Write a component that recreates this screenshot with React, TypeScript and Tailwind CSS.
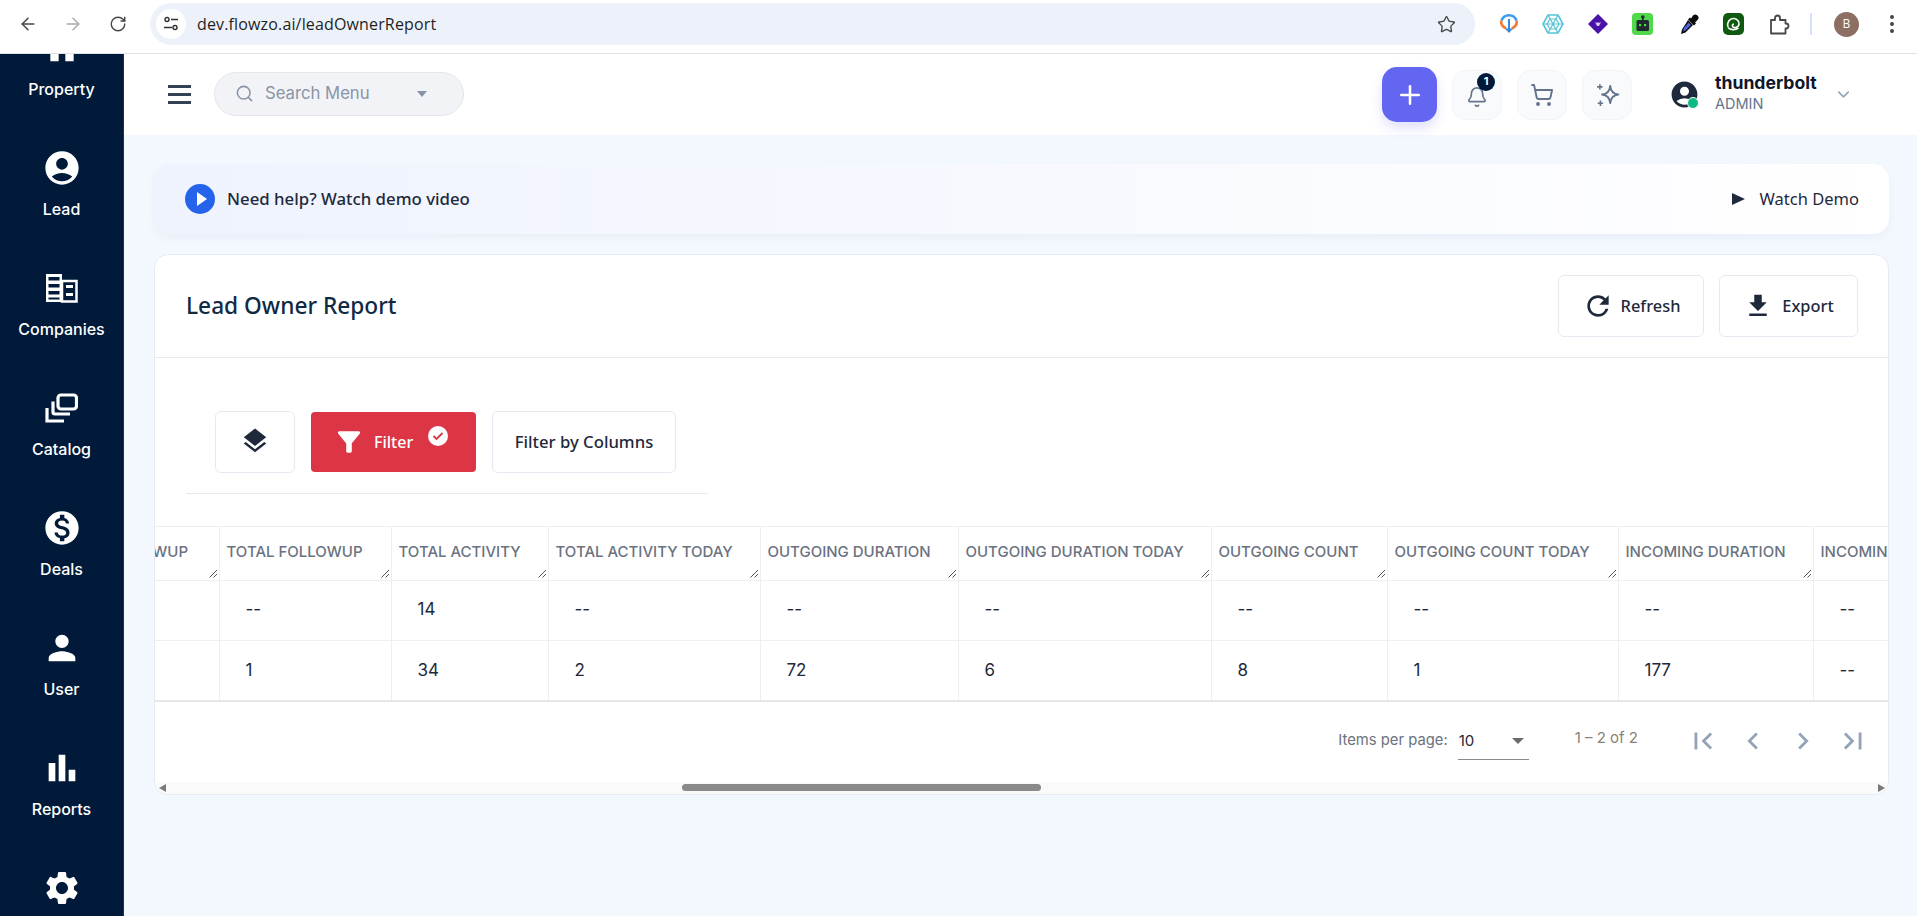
import React from "react";
import { ArrowLeft, ArrowRight, RotateCw, Star, Search, Bell, ShoppingCart, ChevronDown, Plus } from "lucide-react";
import { MdHome, MdAccountCircle, MdMonetizationOn, MdPerson, MdBarChart, MdSettings, MdFirstPage, MdLastPage, MdChevronLeft, MdChevronRight, MdRefresh, MdFileDownload, MdLayers, MdFilterAlt } from "react-icons/md";

const Companies = () => (
  <svg width="33" height="30" viewBox="0 0 33 30" className="mt-[5px] mb-[5px]" fill="none">
    <rect x="1" y="1" width="16" height="28" fill="#fff" />
    <rect x="3.5" y="4" width="11" height="3.5" fill="#011a3a" />
    <rect x="3.5" y="11" width="11" height="3.5" fill="#011a3a" />
    <rect x="3.5" y="18" width="11" height="3.5" fill="#011a3a" />
    <rect x="3.5" y="24.5" width="11" height="2" fill="#011a3a" />
    <rect x="17" y="8" width="14.5" height="20.5" fill="#011a3a" stroke="#fff" strokeWidth="2.5" />
    <rect x="21" y="12" width="7" height="3" fill="#fff" />
    <rect x="21" y="20" width="7" height="3" fill="#fff" />
  </svg>
);

const Catalog = () => (
  <svg width="33" height="30" viewBox="0 0 33 30" className="mt-[5px] mb-[5px]" fill="none" stroke="#fff" strokeWidth="3.2">
    <rect x="13" y="2" width="18.5" height="14" rx="3" />
    <path d="M8 8.5V19a2 2 0 0 0 2 2h15" />
    <path d="M2 15v13h17" />
  </svg>
);

const navIcon = "shrink-0 text-white";

const navItems: { label: string; icon: React.ReactNode }[] = [
  { label: "Property", icon: <MdHome size={40} className={navIcon} /> },
  { label: "Lead", icon: <MdAccountCircle size={40} className={navIcon} /> },
  { label: "Companies", icon: <Companies /> },
  { label: "Catalog", icon: <Catalog /> },
  { label: "Deals", icon: <MdMonetizationOn size={40} className={navIcon} /> },
  { label: "User", icon: <MdPerson size={40} className={navIcon} /> },
  { label: "Reports", icon: <MdBarChart size={40} className={navIcon} /> },
  { label: "", icon: <MdSettings size={40} className={navIcon} /> },
];

const Ext1 = () => (
  <svg width="20" height="22" viewBox="0 0 20 22" fill="none">
    <path d="M2.5 7.5A8 8 0 0 1 17.5 7.5" stroke="#3b9bf0" strokeWidth="2.6" />
    <path d="M2.2 7.5a8 8 0 0 0 5 8M17.8 7.5a8 8 0 0 1-5 8" stroke="#f27c38" strokeWidth="2.6" />
    <path d="M10 6v12" stroke="#2f8be6" strokeWidth="2" />
    <path d="M6 15.5h8L10 20z" fill="#2f8be6" />
  </svg>
);
const Ext2 = () => (
  <svg width="22" height="22" viewBox="0 0 22 22" fill="none" stroke="#55c3d6" strokeWidth="1.2">
    <path d="M6 2h10l5 9-5 9H6l-5-9z" strokeWidth="1.6" />
    <path d="M8 6h6l3 5-3 5H8l-3-5z" />
    <path d="M6 2l10 18M16 2L6 20M1 11h20" />
  </svg>
);
const Ext3 = () => (
  <svg width="22" height="22" viewBox="0 0 22 22">
    <path d="M11 1l10 10-10 10L1 11z" fill="#4a12a8" />
    <path d="M8 9l2 1 1-1 1 1 2-1-2 4h-2z" fill="#d8c8f5" />
  </svg>
);
const Ext4 = () => (
  <svg width="22" height="22" viewBox="0 0 22 22">
    <rect width="21" height="22" rx="4" fill="#4fd84a" />
    <rect x="10" y="3" width="1.6" height="4" fill="#1e2a2e" />
    <circle cx="10.8" cy="4" r="1.8" fill="#1e2a2e" />
    <rect x="4.5" y="7" width="12.5" height="11" rx="1.5" fill="#1e2a2e" />
    <rect x="7" y="11" width="2.2" height="2.2" fill="#4fd84a" />
    <rect x="12" y="11" width="2.2" height="2.2" fill="#4fd84a" />
  </svg>
);
const Ext5 = () => (
  <svg width="22" height="22" viewBox="0 0 22 22">
    <path d="M14 2.5a3 3 0 0 1 4.5 4.5L16 9.5l1 1-2 2-6 -6 2-2 1 1z" fill="#0b0b0b" />
    <path d="M9 7l5 5-7.5 7.5L2 21l1-4.5z" fill="#0b0b0b" />
    <path d="M9.5 9.5l2.5 2.5-5.5 5.5L4 18.5l.8-3.6z" fill="#4a63d8" />
  </svg>
);
const Ext6 = () => (
  <svg width="21" height="22" viewBox="0 0 21 22" fill="none">
    <rect width="21" height="22" rx="5" fill="#0f5a10" />
    <path d="M5 14c-1.5-4 1.5-9 6-8.5 3.5.4 5.5 3.5 5 6-.5 2.5-4 4-6 2.5-1.2-1-.8-2.8 1-3" stroke="#fff" strokeWidth="1.6" />
    <path d="M5 14.5c2 2.5 7 3 10.5.5" stroke="#fff" strokeWidth="1.6" />
  </svg>
);
const ChromePuzzle = () => (
  <svg width="21" height="21" viewBox="0 0 21 21" fill="none" stroke="#474747" strokeWidth="1.8" strokeLinejoin="round" className="ml-[25px]">
    <path d="M2 6h4V4a2.5 2.5 0 0 1 5 0v2h5.5v3.5h.5a2.5 2.5 0 0 1 0 5h-.5V19.5H2z" />
  </svg>
);
const SparkleIcon = () => (
  <svg width="25" height="25" viewBox="0 0 23 23" fill="none" stroke="#64748b" strokeWidth="1.7" strokeLinejoin="round">
    <path d="M14 3.5c.5 5 2.5 7.500 7.500 8-5 .5-7 3-7.500 8-.5-5-2.500-7.500-7.500-8 5-.5 7-3 7.500-8z" />
    <path d="M4.500 2v5M2 4.500h5M5 17v5M2.500 19.500h5" strokeWidth="1.5" />
  </svg>
);

const Chrome = () => (
  <header className="h-[54px] shrink-0 bg-white border-b border-[#e0e2e6] flex items-center pb-[5px] font-['Open_Sans',sans-serif]">
    <ArrowLeft size={20} strokeWidth={1.8} className="ml-[18px] text-[#474747] shrink-0" />
    <ArrowRight size={20} strokeWidth={1.8} className="ml-[25px] text-[#ababab] shrink-0" />
    <RotateCw size={18} strokeWidth={1.9} className="ml-[26px] text-[#474747] shrink-0" />
    <div className="ml-[23px] w-[1325px] h-[42px] rounded-full bg-[#edf2fa] flex items-center pl-[6px] pr-[19px] shrink-0">
      <div className="w-[30px] h-[30px] rounded-full bg-white flex items-center justify-center shrink-0">
        <svg width="16" height="16" viewBox="0 0 16 16" fill="none" stroke="#303030" strokeWidth="1.4">
          <circle cx="4" cy="3.5" r="2" />
          <path d="M8 3.5h7M1 11.5h8" />
          <circle cx="12" cy="11.5" r="2" />
        </svg>
      </div>
      <span className="ml-[11px] text-[16px] tracking-[0.15px] text-[#1f1f1f]">dev.flowzo.ai/leadOwnerReport</span>
      <Star size={19} strokeWidth={1.7} className="ml-auto text-[#474747]" />
    </div>
    <div className="ml-[23px] flex items-center shrink-0">
      <div className="w-[22px] flex justify-center"><Ext1 /></div>
      <div className="ml-[22px] w-[22px] flex justify-center"><Ext2 /></div>
      <div className="ml-[23px] w-[22px] flex justify-center"><Ext3 /></div>
      <div className="ml-[23px] w-[22px] flex justify-center"><Ext4 /></div>
      <div className="ml-[25px] w-[22px] flex justify-center"><Ext5 /></div>
      <div className="ml-[21px] w-[22px] flex justify-center"><Ext6 /></div>
      <ChromePuzzle />
      <div className="ml-[20px] w-[2px] h-[22px] bg-[#d3e3fd]" />
      <div className="ml-[22px] w-[25px] h-[25px] rounded-full bg-[#8d6e63] flex items-center justify-center text-[12px] text-white">B</div>
      <div className="ml-[31px] flex flex-col gap-[3px]">
        <span className="w-[4px] h-[4px] rounded-full bg-[#474747]" />
        <span className="w-[4px] h-[4px] rounded-full bg-[#474747]" />
        <span className="w-[4px] h-[4px] rounded-full bg-[#474747]" />
      </div>
    </div>
  </header>
);

const Sidebar = () => (
  <aside className="w-[124px] shrink-0 bg-[#011a3a] border-r border-[#1c3350] overflow-hidden">
    <div className="-mt-[46px] flex flex-col">
      {navItems.map((n, i) => (
        <div key={i} className="h-[120px] shrink-0 pt-[20px] flex flex-col items-center">
          {n.icon}
          <span className="mt-[10px] text-[16px] leading-[22px] font-medium text-white">{n.label}</span>
        </div>
      ))}
    </div>
  </aside>
);

const TopIconBox = ({ children }: { children: React.ReactNode }) => (
  <div className="relative w-[50px] h-[50px] rounded-[14px] bg-[#f8fafc] border border-[#f1f5f9] flex items-center justify-center text-[#64748b]">
    {children}
  </div>
);

const TopBar = () => (
  <div className="h-[81px] shrink-0 bg-white flex items-center">
    <div className="ml-[44px] flex flex-col gap-[5px] w-[23px]">
      <span className="h-[3px] bg-[#334155]" />
      <span className="h-[3px] bg-[#334155]" />
      <span className="h-[3px] bg-[#334155]" />
    </div>
    <div className="ml-[23px] -mt-[2px] w-[250px] h-[44px] rounded-full bg-[#f1f3f7] border border-[#e5e7eb] flex items-center pl-[20px]">
      <Search size={19} strokeWidth={2} className="text-[#8a94a6]" />
      <span className="ml-[11px] text-[16.7px] text-[#8a94a6]">Search Menu</span>
      <span className="ml-[47px] w-0 h-0 border-l-[5px] border-r-[5px] border-t-[6px] border-l-transparent border-r-transparent border-t-[#8a94a6]" />
    </div>
    <div className="ml-auto flex items-center">
      <div className="w-[55px] h-[55px] rounded-[15px] bg-[#6366f1] shadow-[0_6px_12px_rgba(99,102,241,0.2)] flex items-center justify-center">
        <Plus size={30} strokeWidth={2} className="text-white" />
      </div>
      <div className="ml-[15px] flex gap-[15px]">
        <TopIconBox>
          <Bell size={22} strokeWidth={1.8} className="mt-[5px]" />
          <span className="absolute top-[2px] right-[6px] w-[18px] h-[18px] rounded-full bg-[#011a3a] text-white text-[11px] font-bold flex items-center justify-center">1</span>
        </TopIconBox>
        <TopIconBox><ShoppingCart size={24} strokeWidth={1.9} /></TopIconBox>
        <TopIconBox><SparkleIcon /></TopIconBox>
      </div>
      <div className="ml-[40px] relative w-[26px] h-[26px] text-[#1e293b]">
        <MdAccountCircle size={31} className="-m-[3px]" />
        <span className="absolute -right-[1px] -bottom-[1px] w-[12px] h-[12px] rounded-full bg-[#10b981] border border-white" />
      </div>
      <div className="ml-[17px] -mt-[4px] flex flex-col w-[119px]">
        <span className="text-[17.6px] leading-[22px] font-bold text-[#0f172a]">thunderbolt</span>
        <span className="text-[14.5px] leading-[20px] text-[#64748b]">ADMIN</span>
      </div>
      <ChevronDown size={19} strokeWidth={2} className="text-[#94a3b8] mr-[64px]" />
    </div>
  </div>
);

const Banner = () => (
  <div className="h-[70px] shrink-0 rounded-[16px] bg-gradient-to-r from-[#eff3fe] to-white shadow-[0_4px_10px_rgba(15,23,42,0.04)] flex items-center justify-between pl-[31px] pr-[30px] font-['Noto_Sans',sans-serif]">
    <div className="flex items-center">
      <div className="w-[30px] h-[30px] rounded-full bg-[#2563eb] flex items-center justify-center">
        <span className="ml-[3px] w-0 h-0 border-y-[7px] border-l-[10px] border-y-transparent border-l-white" />
      </div>
      <span className="ml-[12px] text-[16.8px] font-medium text-[#1e293b]">Need help? Watch demo video</span>
    </div>
    <div className="flex items-center">
      <span className="w-0 h-0 border-y-[6.5px] border-l-[13px] border-y-transparent border-l-[#1e293b]" />
      <span className="ml-[15px] text-[16.5px] text-[#1e293b]">Watch Demo</span>
    </div>
  </div>
);

const columns: { title: string; w: number; a: string; b: string }[] = [
  { title: "TODAY FOLLOWUP", w: 177, a: "", b: "" },
  { title: "TOTAL FOLLOWUP", w: 172, a: "--", b: "1" },
  { title: "TOTAL ACTIVITY", w: 157, a: "14", b: "34" },
  { title: "TOTAL ACTIVITY TODAY", w: 212, a: "--", b: "2" },
  { title: "OUTGOING DURATION", w: 198, a: "--", b: "72" },
  { title: "OUTGOING DURATION TODAY", w: 253, a: "--", b: "6" },
  { title: "OUTGOING COUNT", w: 176, a: "--", b: "8" },
  { title: "OUTGOING COUNT TODAY", w: 231, a: "--", b: "1" },
  { title: "INCOMING DURATION", w: 195, a: "--", b: "177" },
  { title: "INCOMING DURATION TODAY", w: 253, a: "--", b: "--" },
];

const ResizeMark = () => (
  <svg width="9" height="9" viewBox="0 0 9 9" className="absolute right-[1px] bottom-[2px]" stroke="#555" strokeWidth="1" fill="none">
    <path d="M0.5 8.5L8 1M4.5 8.5L8 5" />
  </svg>
);

const Table = () => (
  <div className="overflow-hidden h-[176px] shrink-0 border-t border-[#eceef2] border-b-2 border-b-[#e5e7eb] font-['Inter',sans-serif]">
    <table className="table-fixed border-collapse -ml-[113px] w-[2024px]">
      <colgroup>
        {columns.map((c) => (
          <col key={c.title} style={{ width: c.w }} />
        ))}
      </colgroup>
      <thead>
        <tr className="h-[53px]">
          {columns.map((c) => (
            <th key={c.title} className="relative align-top text-left font-medium whitespace-nowrap pl-[7px] pt-[15px] text-[15px] leading-[20px] text-[#6b7280] border-r border-b border-[#eceef2]">
              {c.title}
              <ResizeMark />
            </th>
          ))}
        </tr>
      </thead>
      <tbody>
        {(["a", "b"] as const).map((k) => (
          <tr key={k} className="h-[60px]">
            {columns.map((c) => (
              <td key={c.title} className={"pl-[26px] text-[17px] text-[#1e293b] border-r border-[#eceef2] " + (k === "a" ? "border-b" : "")}>
                {c[k]}
              </td>
            ))}
          </tr>
        ))}
      </tbody>
    </table>
  </div>
);

const Pager = () => (
  <div className="flex-1 flex items-center justify-end pr-[10px] pb-[3px] text-[#6b7280] font-['Inter',sans-serif]">
    <span className="text-[14.8px] text-[#6b7280]">Items per page:</span>
    <div className="ml-[10px] w-[71px] h-[36px] mt-[2px] border-b border-[#8a8a8a] flex items-center justify-between pr-[5px]">
      <span className="text-[15px] text-[#1f2937] pl-[1px]">10</span>
      <span className="w-0 h-0 border-l-[6px] border-r-[6px] border-t-[6px] border-l-transparent border-r-transparent border-t-[#6b6b6b]" />
    </div>
    <span className="ml-[46px] mr-[40px] -mt-[5px] text-[15px] text-[#8a8178]">1 – 2 of 2</span>
    <div className="flex text-[#94a3b8]">
      <div className="w-[50px] flex justify-center"><MdFirstPage size={34} /></div>
      <div className="w-[50px] flex justify-center"><MdChevronLeft size={34} /></div>
      <div className="w-[50px] flex justify-center"><MdChevronRight size={34} /></div>
      <div className="w-[50px] flex justify-center"><MdLastPage size={34} /></div>
    </div>
  </div>
);

const ScrollBar = () => (
  <div className="h-[12px] shrink-0 bg-[#fafafa] flex items-center pl-[4px] pr-[3px]">
    <span className="w-0 h-0 border-y-[4px] border-r-[7px] border-y-transparent border-r-[#7a7a7a]" />
    <span className="ml-[516px] -mt-[2px] w-[359px] h-[7px] rounded-full bg-[#8a8a8a]" />
    <span className="ml-auto w-0 h-0 border-y-[4px] border-l-[7px] border-y-transparent border-l-[#7a7a7a]" />
  </div>
);

const OutlineBtn = ({ className, children }: { className: string; children: React.ReactNode }) => (
  <div className={"h-[62px] rounded-[6px] border border-[#e5e9f2] bg-white flex items-center justify-center text-[16.4px] font-medium text-[#1e293b] " + className}>
    {children}
  </div>
);

const Card = () => (
  <div className="h-[541px] shrink-0 rounded-[14px] bg-white border border-[#e5e9f2] overflow-hidden flex flex-col font-['Noto_Sans',sans-serif]">
    <div className="h-[103px] shrink-0 border-b border-[#e5e9f2] flex items-center justify-between pl-[31px] pr-[30px]">
      <h1 className="mt-[1px] text-[22.7px] font-medium text-[#0f2a44]">Lead Owner Report</h1>
      <div className="flex gap-[15px]">
        <OutlineBtn className="w-[146px]">
          <MdRefresh size={32} className="-mr-[1px]" />
          <span className="ml-[8px]">Refresh</span>
        </OutlineBtn>
        <OutlineBtn className="w-[139px]">
          <MdFileDownload size={30} />
          <span className="ml-[9px]">Export</span>
        </OutlineBtn>
      </div>
    </div>
    <div className="h-[168px] shrink-0 pt-[53px] pl-[31px]">
      <div className="w-[522px] h-[83px] border-b border-[#e5e9f2] pl-[29px] flex gap-[16px] items-start">
        <OutlineBtn className="w-[80px]">
          <MdLayers size={30} className="mt-[-2px]" />
        </OutlineBtn>
        <div className="w-[165px] h-[60px] mt-[1px] rounded-[4px] bg-[#dc3545] text-white text-[16px] font-medium flex items-center pl-[24px]">
          <MdFilterAlt size={32} className="-ml-[2px] -mr-[3px] scale-x-[1.05]" />
          <span className="ml-[12px] mr-[14px]">Filter</span>
          <svg width="20" height="20" viewBox="0 0 20 20" className="mb-[12px] ml-[1px]">
            <circle cx="10" cy="10" r="10" fill="#fff" />
            <path d="M5.5 10l3 3 6-6" stroke="#dc3545" strokeWidth="1.8" fill="none" />
          </svg>
        </div>
        <OutlineBtn className="w-[184px]">
          <span className="text-[16.7px]">Filter by Columns</span>
        </OutlineBtn>
      </div>
    </div>
    <Table />
    <Pager />
    <ScrollBar />
  </div>
);

export default function App() {
  return (
    <div className="w-[1917px] h-[916px] overflow-hidden flex flex-col font-['Inter',sans-serif] bg-[#f3f7fe]">
      <Chrome />
      <div className="flex flex-1 min-h-0">
        <Sidebar />
        <main className="flex-1 min-w-0 flex flex-col">
          <TopBar />
          <div className="flex-1 min-h-0 flex flex-col gap-[20px] pt-[29px] pl-[30px] pr-[28px]">
            <Banner />
            <Card />
          </div>
        </main>
      </div>
    </div>
  );
}
